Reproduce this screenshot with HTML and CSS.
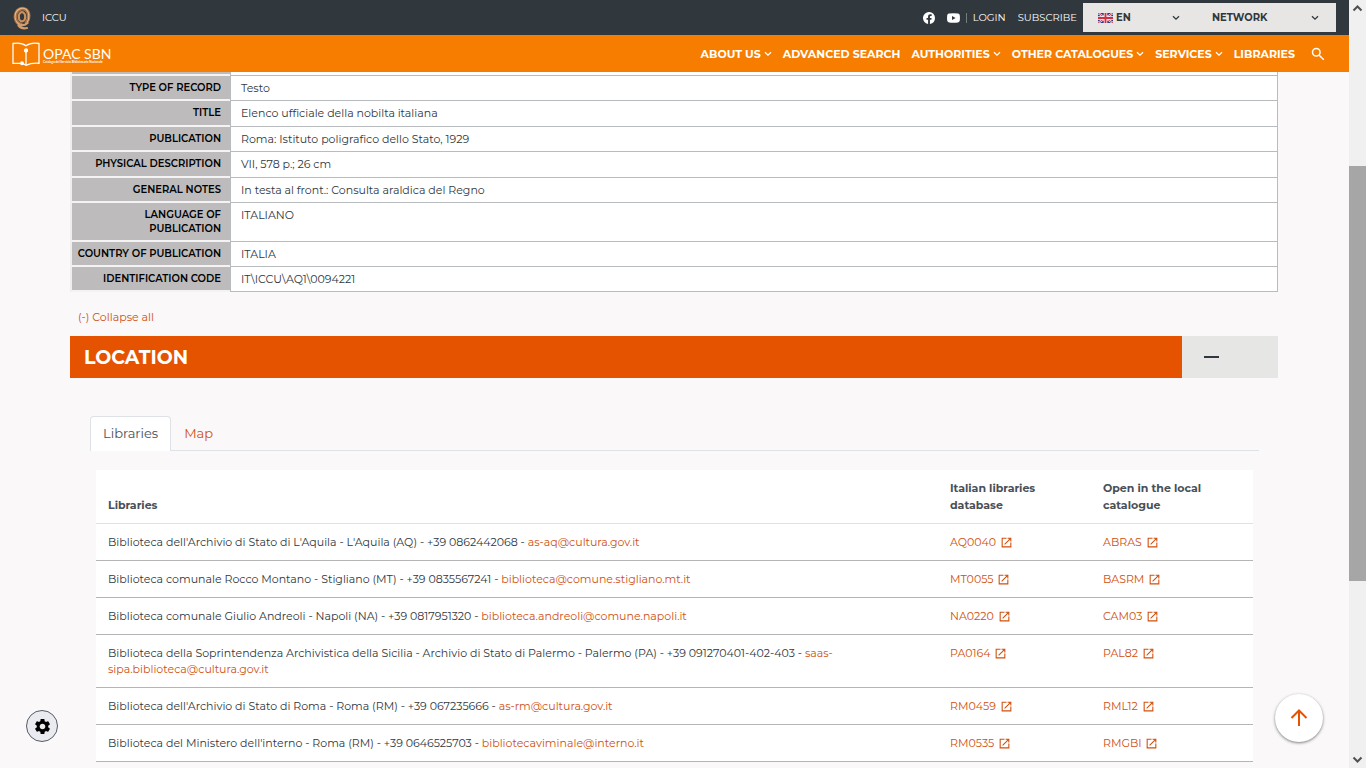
FILE: index.html
```html
<!DOCTYPE html>
<html lang="en">
<head>
    <meta charset="UTF-8">
    <title>OPAC SBN</title>
    <link rel="stylesheet" href="styles.css">
</head>
<body>
    <!-- shared icons -->
    <svg class="sprite" aria-hidden="true">
        <symbol id="chevron" viewBox="0 0 8 6"><path d="M1 1.2l3 3 3-3" fill="none" stroke="currentColor" stroke-width="1.3"/></symbol>
        <symbol id="open" viewBox="0 0 24 24"><path fill="currentColor" d="M19 19H5V5h7V3H3v18h18v-9h-2v7zM14 3v2h3.6l-9.8 9.8 1.4 1.4L19 6.4V10h2V3h-7z"/></symbol>
    </svg>

    <div class="page">
        <header>
            <div class="topbar">
                <a class="iccu" href="#">
                    <svg width="18" height="24" viewBox="0 0 18 24" fill="none" stroke-linecap="round">
                        <path d="M13.5 16.500C16.500 12.500 16.500 6.500 13 3.800 9.500 1.300 4.600 3 3 7.500 1.400 12.500 3.500 17.500 8 18.500" stroke="#a87349" stroke-width="3.600"/>
                        <path d="M14.300 16C16.800 12 16.500 6 13 3.200 9.500 1 4.800 2.500 2.500 7.200 1.300 12 3 16.500 6.500 18.300" stroke="#e8b98c" stroke-width="1.100"/>
                        <ellipse cx="9" cy="10.800" rx="3.200" ry="4.600" fill="#30373d" stroke="#c9925f" stroke-width="2.200"/>
                        <path d="M6 18.500c3 1.300 6 .8 8.500-1.500M5.500 19.500c2 2.500 5.500 3.300 8.500 2.500" stroke="#d39c6b" stroke-width="2.200"/>
                    </svg>
                    <span>ICCU</span>
                </a>
                <nav class="top-links">
                    <a href="#" aria-label="Facebook">
                        <svg width="12" height="12" viewBox="0 0 16 16"><path fill="currentColor" d="M16 8a8 8 0 1 0-9.250 7.900v-5.600H4.700V8h2.050V6.200c0-2 1.200-3.100 3-3.100.9 0 1.800.15 1.800.15v2h-1c-1 0-1.300.6-1.300 1.250V8h2.200l-.35 2.300H9.250v5.600A8 8 0 0 0 16 8z"/></svg>
                    </a>
                    <a href="#" aria-label="YouTube">
                        <svg width="13" height="10" viewBox="0 0 13 10"><path fill="currentColor" fill-rule="evenodd" d="M2 .6Q6.500 0 11 .6 12.600.8 12.800 2.500q.3 2.500 0 5Q12.600 9.200 11 9.400 6.500 10 2 9.400.4 9.200.2 7.500q-.3-2.500 0-5Q.4.8 2 .6zM5 3v4l3.600-2z"/></svg>
                    </a>
                    <span class="divider"></span>
                    <a href="#">LOGIN</a>
                    <a href="#">SUBSCRIBE</a>
                </nav>
                <div class="selects">
                    <label class="lang">
                        <svg width="15" height="10" viewBox="0 0 30 20">
                            <path fill="#283c85" d="M0 0h30v20H0z"/>
                            <path stroke="#fff" stroke-width="4" d="M0 0l30 20M30 0L0 20"/>
                            <path stroke="#d22f45" stroke-width="2" d="M0 0l30 20M30 0L0 20"/>
                            <path stroke="#fff" stroke-width="7" d="M15 0v20M0 10h30"/>
                            <path stroke="#d22f45" stroke-width="4" d="M15 0v20M0 10h30"/>
                        </svg>
                        <select aria-label="Language"><option>EN</option></select>
                        <svg class="chevron" width="8" height="6"><use href="#chevron"/></svg>
                    </label>
                    <label class="network">
                        <select aria-label="Network"><option>NETWORK</option></select>
                        <svg class="chevron" width="8" height="6"><use href="#chevron"/></svg>
                    </label>
                </div>
            </div>

            <div class="navbar">
                <a class="brand" href="#">
                    <svg width="28" height="24" viewBox="0 0 28 24" fill="none" stroke="currentColor" stroke-width="1.300">
                        <path d="M8.500 21.300H1V1.500c5-.9 9.500-.5 13 2.300 3.500-2.800 8-3.200 13-2.300v19.800c-5-.3-9 0-13 2-1-.7-2-1.200-3.200-1.500"/>
                        <path d="M14 9.500v13.500"/>
                        <circle cx="14" cy="8.500" r="1.500" fill="currentColor"/>
                        <circle cx="10" cy="21.300" r="1.300" fill="currentColor"/>
                    </svg>
                    <span class="brand-name">OPAC SBN<small>Catalogo del Servizio Bibliotecario Nazionale</small></span>
                </a>
                <nav class="menu">
                    <a href="#">ABOUT US <svg width="8" height="6"><use href="#chevron"/></svg></a>
                    <a href="#">ADVANCED SEARCH</a>
                    <a href="#">AUTHORITIES <svg width="8" height="6"><use href="#chevron"/></svg></a>
                    <a href="#">OTHER CATALOGUES <svg width="8" height="6"><use href="#chevron"/></svg></a>
                    <a href="#">SERVICES <svg width="8" height="6"><use href="#chevron"/></svg></a>
                    <a href="#">LIBRARIES</a>
                </nav>
                <button class="search" aria-label="Search">
                    <svg width="14" height="14" viewBox="0 0 14 14" fill="none" stroke="currentColor" stroke-width="1.500"><circle cx="5.300" cy="5.300" r="3.800"/><path d="M8.200 8.200l4.600 4.600"/></svg>
                </button>
            </div>
        </header>

        <main>
            <table class="record">
                <tr class="cut"><th></th><td></td></tr>
                <tr><th>TYPE OF RECORD</th><td>Testo</td></tr>
                <tr><th>TITLE</th><td>Elenco ufficiale della nobilta italiana</td></tr>
                <tr><th>PUBLICATION</th><td>Roma: Istituto poligrafico dello Stato, 1929</td></tr>
                <tr><th>PHYSICAL DESCRIPTION</th><td>VII, 578 p.; 26 cm</td></tr>
                <tr><th>GENERAL NOTES</th><td>In testa al front.: Consulta araldica del Regno</td></tr>
                <tr><th>LANGUAGE OF<br>PUBLICATION</th><td>ITALIANO</td></tr>
                <tr><th>COUNTRY OF PUBLICATION</th><td>ITALIA</td></tr>
                <tr><th>IDENTIFICATION CODE</th><td>IT\ICCU\AQ1\0094221</td></tr>
            </table>

            <a class="collapse-all" href="#">(-) Collapse all</a>

            <div class="section-head">
                <h2>LOCATION</h2>
                <button aria-label="Collapse"><span></span></button>
            </div>

            <div class="tabs">
                <a class="active" href="#">Libraries</a>
                <a href="#">Map</a>
            </div>

            <table class="libraries">
                <thead>
                    <tr><th>Libraries</th><th>Italian libraries database</th><th>Open in the local catalogue</th></tr>
                </thead>
                <tbody>
                    <tr>
                        <td>Biblioteca dell'Archivio di Stato di L'Aquila - L'Aquila (AQ) - +39 0862442068 - <a href="#">as-aq@cultura.gov.it</a></td>
                        <td><a href="#">AQ0040 <svg width="13" height="13"><use href="#open"/></svg></a></td>
                        <td><a href="#">ABRAS <svg width="13" height="13"><use href="#open"/></svg></a></td>
                    </tr>
                    <tr>
                        <td>Biblioteca comunale Rocco Montano - Stigliano (MT) - +39 0835567241 - <a href="#">biblioteca@comune.stigliano.mt.it</a></td>
                        <td><a href="#">MT0055 <svg width="13" height="13"><use href="#open"/></svg></a></td>
                        <td><a href="#">BASRM <svg width="13" height="13"><use href="#open"/></svg></a></td>
                    </tr>
                    <tr>
                        <td>Biblioteca comunale Giulio Andreoli - Napoli (NA) - +39 0817951320 - <a href="#">biblioteca.andreoli@comune.napoli.it</a></td>
                        <td><a href="#">NA0220 <svg width="13" height="13"><use href="#open"/></svg></a></td>
                        <td><a href="#">CAM03 <svg width="13" height="13"><use href="#open"/></svg></a></td>
                    </tr>
                    <tr>
                        <td>Biblioteca della Soprintendenza Archivistica della Sicilia - Archivio di Stato di Palermo - Palermo (PA) - +39 091270401-402-403 - <a href="#">saas-sipa.biblioteca@cultura.gov.it</a></td>
                        <td><a href="#">PA0164 <svg width="13" height="13"><use href="#open"/></svg></a></td>
                        <td><a href="#">PAL82 <svg width="13" height="13"><use href="#open"/></svg></a></td>
                    </tr>
                    <tr>
                        <td>Biblioteca dell'Archivio di Stato di Roma - Roma (RM) - +39 067235666 - <a href="#">as-rm@cultura.gov.it</a></td>
                        <td><a href="#">RM0459 <svg width="13" height="13"><use href="#open"/></svg></a></td>
                        <td><a href="#">RML12 <svg width="13" height="13"><use href="#open"/></svg></a></td>
                    </tr>
                    <tr>
                        <td>Biblioteca del Ministero dell'interno - Roma (RM) - +39 0646525703 - <a href="#">bibliotecaviminale@interno.it</a></td>
                        <td><a href="#">RM0535 <svg width="13" height="13"><use href="#open"/></svg></a></td>
                        <td><a href="#">RMGBI <svg width="13" height="13"><use href="#open"/></svg></a></td>
                    </tr>
                </tbody>
            </table>
        </main>
    </div>

    <div class="scrollbar">
        <svg width="17" height="17" viewBox="0 0 17 17"><path d="M4.500 10.500l4-4 4 4" fill="none" stroke="#505050" stroke-width="2"/></svg>
        <div class="track"><div class="thumb"></div></div>
        <svg width="17" height="17" viewBox="0 0 17 17"><path d="M4.500 6.500l4 4 4-4" fill="none" stroke="#505050" stroke-width="2"/></svg>
    </div>

    <button class="cookie" aria-label="Cookie settings">
        <svg width="19" height="19" viewBox="0 0 24 24"><path d="M19.140 12.940c.04-.3.060-.61.060-.94s-.02-.64-.07-.94l2.030-1.580c.18-.14.230-.41.120-.61l-1.920-3.320c-.12-.22-.37-.29-.59-.22l-2.390.96c-.5-.38-1.030-.7-1.620-.94l-.36-2.540c-.04-.24-.24-.41-.48-.41h-3.840c-.24 0-.43.170-.47.410l-.36 2.540c-.59.240-1.130.57-1.620.94l-2.390-.96c-.22-.08-.47 0-.59.220L2.740 8.870c-.12.210-.08.470.120.610l2.030 1.580c-.05.3-.09.630-.09.940s.02.640.070.940l-2.030 1.580c-.18.140-.23.410-.12.610l1.920 3.320c.12.220.37.290.59.220l2.390-.96c.5.380 1.030.7 1.620.94l.36 2.540c.05.240.24.410.48.410h3.840c.24 0 .44-.17.470-.41l.36-2.540c.59-.24 1.130-.56 1.620-.94l2.390.96c.22.080.47 0 .59-.22l1.920-3.320c.12-.22.070-.47-.12-.61l-2.010-1.580zM12 15.600c-1.980 0-3.600-1.620-3.600-3.600s1.620-3.600 3.600-3.600 3.600 1.620 3.600 3.600-1.620 3.600-3.600 3.600z"/></svg>
    </button>
    <button class="to-top" aria-label="Back to top">
        <svg width="18" height="18" viewBox="0 0 18 18" fill="none" stroke="currentColor" stroke-width="2"><path d="M9 17V2M1.500 9L9 1.500 16.500 9"/></svg>
    </button>
</body>
</html>
```
FILE: styles.css
```css
* {
    margin: 0;
    padding: 0;
    box-sizing: border-box;
}

body {
    display: flex;
    height: 100vh;
    overflow: hidden;
    font-family: Montserrat, Inter, sans-serif;
    font-size: 11px;
    color: #30373d;
    background: #faf8f9;
}

a {
    color: #cf500f;
    text-decoration: none;
}

button, select {
    font: inherit;
    color: inherit;
    border: none;
    background: none;
    cursor: pointer;
}

.sprite {
    position: absolute;
    width: 0;
    height: 0;
}

.page {
    flex: 1;
    min-width: 0;
}

/* top bar */
.topbar {
    display: flex;
    align-items: center;
    height: 35px;
    padding: 0 13px;
    font-size: 10px;
    background: #30373d;
}

.topbar a {
    display: flex;
    align-items: center;
    color: #fff;
}

.topbar .iccu {
    gap: 11px;
    margin-right: auto;
}

.top-links {
    display: flex;
    align-items: center;
    gap: 12px;
    margin-right: 6px;
}

.divider {
    width: 1px;
    height: 10px;
    margin: 0 -6px;
    background: #767b80;
}

.selects {
    display: flex;
    width: 253px;
    height: 29px;
    font-weight: 700;
    background: #e8e6e5;
}

.selects label {
    display: flex;
    align-items: center;
    gap: 3px;
    padding: 0 17px 0 15px;
}

.selects select {
    flex: 1;
    appearance: none;
}

.lang {
    width: 114px;
}

.network {
    flex: 1;
}

/* orange navigation */
.navbar {
    display: flex;
    align-items: center;
    height: 37px;
    padding: 0 24px 0 12px;
    color: #fff;
    background: #f67d00;
}

.navbar a {
    color: #fff;
}

.brand {
    display: flex;
    align-items: center;
    gap: 3px;
    margin-right: auto;
}

.brand-name {
    padding-top: 4px;
    font-family: Lato, sans-serif;
    font-size: 14px;
    line-height: 12px;
}

.brand-name small {
    display: block;
    font-size: 3px;
    font-weight: 700;
    line-height: 4px;
}

.menu {
    display: flex;
    gap: 11px;
    font-weight: 700;
}

.menu a {
    display: flex;
    align-items: center;
    gap: 3px;
}

.search {
    display: flex;
    margin-left: 16px;
}

/* record details */
main {
    padding: 0 71px 0 70px;
}

table {
    width: 100%;
    border-spacing: 0;
    text-align: left;
}

.record {
    table-layout: fixed;
}

.record tr:nth-child(3), .record tr:nth-child(5) {
    height: 26px;
}

.record .cut {
    height: 4px;
}

.record th {
    width: 160px;
    padding: 5px 9px 4px 4px;
    border-left: 2px solid #eeeeef;
    border-bottom: 2px solid #f3f3f4;
    font-size: 10px;
    font-weight: 600;
    line-height: 14px;
    text-align: right;
    vertical-align: top;
    white-space: nowrap;
    color: #000;
    background: #bdbbbc;
}

.record td {
    padding: 4px 10px;
    border: 1px solid #b8bcbf;
    border-top: none;
    line-height: 16px;
    vertical-align: top;
    background: #fff;
}

.record .cut th, .record .cut td {
    padding: 0;
}

.collapse-all {
    display: inline-block;
    margin: 17px 0 11px 8px;
    line-height: 16px;
}

/* location */
.section-head {
    display: flex;
    height: 42px;
    margin-bottom: 38px;
}

.section-head h2 {
    flex: 1;
    padding-left: 14px;
    font-size: 19px;
    line-height: 43px;
    color: #fff;
    background: #e65300;
}

.section-head button {
    width: 96px;
    padding-left: 22px;
    background: #e6e6e4;
}

.section-head button span {
    display: block;
    width: 15px;
    height: 2px;
    background: #30373d;
}

.tabs {
    display: flex;
    margin: 0 19px 0 20px;
    border-bottom: 1px solid #dee2e6;
    font-size: 13px;
    line-height: 33px;
}

.tabs a {
    padding: 0 12px;
    border: 1px solid transparent;
    border-bottom: none;
}

.tabs .active {
    margin-bottom: -1px;
    border-color: #dee2e6;
    border-radius: 4px 4px 0 0;
    color: #495057;
    background: #fff;
}

.libraries {
    width: calc(100% - 51px);
    margin: 19px 25px 0 26px;
    background: #fff;
    table-layout: fixed;
}

.libraries th {
    padding: 10px 12px 9px;
    border-bottom: 1px solid #dee2e6;
    line-height: 17px;
    vertical-align: bottom;
    color: #495057;
}

.libraries th:nth-child(2) {
    width: 153px;
}

.libraries th:nth-child(3) {
    width: 162px;
}

.libraries td {
    padding: 10px 12px;
    border-bottom: 1px solid #b5b5b5;
    line-height: 16px;
    vertical-align: top;
}

.libraries svg {
    margin-left: 1px;
    vertical-align: -3px;
}

/* scrollbar */
.scrollbar {
    display: flex;
    flex-direction: column;
    width: 17px;
    background: #f0f0f0;
}

.track {
    flex: 1;
    padding-top: 149px;
}

.thumb {
    height: 71%;
    background: #a6a6a6;
}

/* floating buttons */
.cookie, .to-top {
    position: fixed;
    display: flex;
    align-items: center;
    justify-content: center;
    border-radius: 50%;
}

.cookie {
    left: 26px;
    bottom: 26px;
    width: 32px;
    height: 32px;
    border: 1px solid #555b66;
    background: #eaebf0;
}

.to-top {
    right: 43px;
    bottom: 26px;
    width: 48px;
    height: 48px;
    color: #e65300;
    background: #fff;
    box-shadow: 0 1px 3px rgba(0, 0, 0, 0.5);
}
```
